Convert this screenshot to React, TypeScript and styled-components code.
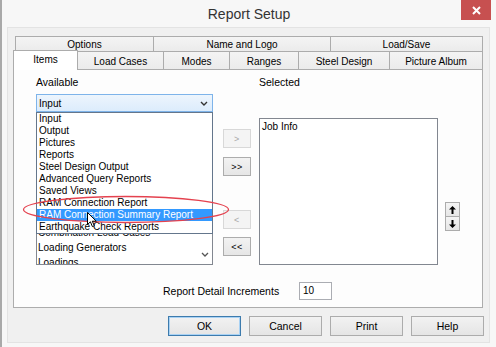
import React from "react";
import styled, { createGlobalStyle, css } from "styled-components";

const GlobalStyle = createGlobalStyle`
  html, body {
    margin: 0;
    padding: 0;
    background: #fafafa;
  }
  body {
    font-family: "Liberation Sans", Arial, sans-serif;
    font-size: 10px;
    color: #000;
  }
`;

const Window = styled.div`
  width: 496px;
  height: 347px;
  box-sizing: border-box;
  border-left: 2px solid #a9a9a9;
  background: #f7f7f7;
  display: flex;
  flex-direction: column;
  overflow: hidden;
`;

const TitleBar = styled.div`
  height: 27px;
  flex-shrink: 0;
  display: grid;
  grid-template-columns: 1fr auto 1fr;
  align-items: start;
`;

const Title = styled.div`
  grid-column: 2;
  margin-top: 7px;
  font-size: 14px;
  line-height: 15px;
  color: #333;
`;

const CloseButton = styled.div`
  grid-column: 3;
  justify-self: end;
  margin-right: 5px;
  width: 30px;
  height: 20px;
  background: #c75050;
  display: flex;
  align-items: center;
  justify-content: center;
`;

const Client = styled.div`
  margin: 0 6px 4px 5px;
  height: 316px;
  flex-shrink: 0;
  box-sizing: border-box;
  border: 1px solid #e3e3e3;
  background: #f0f0f0;
  display: flex;
  flex-direction: column;
  padding: 8px 0 0 5px;
`;

const Tabs = styled.div`
  width: 470px;
  display: flex;
  flex-direction: column;
`;

const TabRow = styled.div<{ $indent?: number; $h: number }>`
  display: flex;
  height: ${(p) => p.$h}px;
  padding-left: ${(p) => p.$indent || 0}px;
`;

const Tab = styled.div<{ $w: number; $active?: boolean }>`
  width: ${(p) => p.$w}px;
  box-sizing: border-box;
  margin-right: -1px;
  border: 1px solid #acacac;
  border-bottom: none;
  background: linear-gradient(#f4f4f4, #ebebeb);
  display: flex;
  align-items: center;
  justify-content: center;
  font-size: 10px;
  padding-top: 1px;
  ${(p) =>
    p.$active &&
    css`
      position: relative;
      z-index: 2;
      height: 20px;
      margin-top: -1px;
      background: #fff;
      padding-top: 0;
      padding-bottom: 2px;
    `}
`;

const Panel = styled.div`
  position: relative;
  width: 470px;
  height: 239px;
  box-sizing: border-box;
  border: 1px solid #adadad;
  background: #fdfdfd;
  display: grid;
  grid-template-columns: 177px 10px 28px 8px 179px 7px 15px;
  grid-template-rows: 12px 18px 147px auto;
  row-gap: 6px;
  padding: 6px 0 0 22px;
`;

const Label = styled.div<{ $col: number }>`
  grid-column: ${(p) => p.$col};
  grid-row: 1;
  font-size: 10.5px;
  line-height: 12px;
  white-space: nowrap;
`;

const ComboWrap = styled.div`
  grid-column: 1;
  grid-row: 2;
  position: relative;
  z-index: 3;
`;

const Combo = styled.div`
  height: 18px;
  box-sizing: border-box;
  border: 1px solid #7eb4ea;
  background: linear-gradient(#edf5fd, #dcecfc);
  display: flex;
  align-items: center;
  justify-content: space-between;
  padding: 0 4px 0 2px;
`;

const Dropdown = styled.div`
  position: absolute;
  top: 18px;
  left: 0;
  width: 177px;
  box-sizing: border-box;
  border: 1px solid #64768c;
  background: #fff;
`;

const DropItem = styled.div<{ $selected?: boolean }>`
  height: 12px;
  line-height: 12px;
  padding-left: 2px;
  white-space: nowrap;
  ${(p) =>
    p.$selected &&
    css`
      background: #3399ff;
      color: #fff;
    `}
`;

const Ellipse = styled.svg`
  position: absolute;
  left: -14px;
  top: 101px;
`;

const Cursor = styled.svg`
  position: absolute;
  left: 51px;
  top: 118px;
`;

const ListBox = styled.div<{ $col: number }>`
  grid-column: ${(p) => p.$col};
  grid-row: 3;
  position: relative;
  box-sizing: border-box;
  border: 1px solid #828790;
  background: #fff;
  overflow: hidden;
`;

/* the upper part of this list sits under the open dropdown */
const AvailItems = styled.div`
  padding: 106px 0 0 1px;
`;

const AvailItem = styled.div`
  height: 15px;
  line-height: 15px;
  white-space: nowrap;
`;

const SelectedItem = styled.div`
  padding: 1px 2px;
  line-height: 13px;
`;

const ScrollArrow = styled.svg`
  position: absolute;
  right: 3px;
  bottom: 7px;
`;

const MoveColumn = styled.div`
  grid-column: 3;
  grid-row: 3;
  display: flex;
  flex-direction: column;
  padding-top: 11px;
`;

const SmallButton = styled.div<{ $disabled?: boolean; $gap?: number }>`
  height: 19px;
  margin-top: ${(p) => p.$gap || 0}px;
  box-sizing: border-box;
  border: 1px solid ${(p) => (p.$disabled ? "#d8d8d8" : "#acacac")};
  background: ${(p) =>
    p.$disabled ? "#f4f4f4" : "linear-gradient(#f2f2f2, #e6e6e6)"};
  color: ${(p) => (p.$disabled ? "#a8a8a8" : "#000")};
  display: flex;
  align-items: center;
  justify-content: center;
  font-size: 9px;
  letter-spacing: 0.5px;
`;

const OrderColumn = styled.div`
  grid-column: 7;
  grid-row: 3;
  margin-top: 85px;
  display: flex;
  flex-direction: column;
`;

const OrderButton = styled.div`
  width: 15px;
  height: 15px;
  box-sizing: border-box;
  border: 1px solid #acacac;
  margin-top: -1px;
  background: linear-gradient(#f4f4f4, #e6e6e6);
  display: flex;
  align-items: center;
  justify-content: center;
`;

const ReportRow = styled.div`
  grid-column: 1 / -1;
  grid-row: 4;
  margin-top: 4px;
  display: flex;
  align-items: center;
  padding-left: 127px;
`;

const ReportLabel = styled.div`
  width: 136px;
  font-size: 10.5px;
  white-space: nowrap;
`;

const NumberBox = styled.div`
  width: 33px;
  height: 18px;
  box-sizing: border-box;
  border: 1px solid #abadb3;
  background: #fff;
  padding: 0 3px;
  line-height: 15px;
`;

const ButtonRow = styled.div`
  margin-top: 8px;
  display: flex;
  justify-content: flex-end;
  gap: 8px;
  padding-right: 5px;
`;

const DialogButton = styled.div<{ $default?: boolean }>`
  width: 73px;
  height: 20px;
  box-sizing: border-box;
  border: 1px solid ${(p) => (p.$default ? "#3d7bad" : "#acacac")};
  background: linear-gradient(#f2f2f2, #e5e5e5);
  display: flex;
  align-items: center;
  justify-content: center;
  font-size: 10.5px;
  ${(p) =>
    p.$default &&
    css`
      box-shadow: inset 0 0 0 1px #a9d2f4;
    `}
`;

const Chevron = () => (
  <svg width="8" height="5" viewBox="0 0 8 5">
    <path d="M1 1 L4 4 L7 1" fill="none" stroke="#333" strokeWidth="1.4" />
  </svg>
);

const ArrowIcon = ({ down }: { down?: boolean }) => (
  <svg width="7" height="8" viewBox="0 0 7 8" style={down ? { transform: "rotate(180deg)" } : undefined}>
    <path d="M3.5 0 L7 3.5 L4.5 3.5 L4.5 8 L2.5 8 L2.5 3.5 L0 3.5 Z" fill="#000" />
  </svg>
);

const dropItems = [
  "Input",
  "Output",
  "Pictures",
  "Reports",
  "Steel Design Output",
  "Advanced Query Reports",
  "Saved Views",
  "RAM Connection Report",
  "RAM Connection Summary Report",
  "Earthquake Check Reports",
];

const availItems = ["Combination Load Cases", "Loading Generators", "Loadings"];

const row1 = [
  { name: "Options", w: 139 },
  { name: "Name and Logo", w: 178 },
  { name: "Load/Save", w: 153 },
];

const row2 = [
  { name: "Items", w: 65, active: true },
  { name: "Load Cases", w: 87 },
  { name: "Modes", w: 67 },
  { name: "Ranges", w: 70 },
  { name: "Steel Design", w: 92 },
  { name: "Picture Album", w: 94 },
];

const App = () => {
  return (
    <>
      <GlobalStyle />
      <Window>
        <TitleBar>
          <Title>Report Setup</Title>
          <CloseButton>
            <svg width="9" height="9" viewBox="0 0 9 9">
              <path d="M1 1 L8 8 M8 1 L1 8" stroke="#fff" strokeWidth="2" />
            </svg>
          </CloseButton>
        </TitleBar>
        <Client>
          <Tabs>
            <TabRow $indent={2} $h={15}>
              {row1.map((t) => (
                <Tab key={t.name} $w={t.w}>
                  {t.name}
                </Tab>
              ))}
            </TabRow>
            <TabRow $h={18}>
              {row2.map((t) => (
                <Tab key={t.name} $w={t.w} $active={t.active}>
                  {t.name}
                </Tab>
              ))}
            </TabRow>
          </Tabs>
          <Panel>
            <Label $col={1}>Available</Label>
            <Label $col={5}>Selected</Label>
            <ComboWrap>
              <Combo>
                <span>Input</span>
                <Chevron />
              </Combo>
              <Dropdown>
                {dropItems.map((item) => (
                  <DropItem key={item} $selected={item === "RAM Connection Summary Report"}>
                    {item}
                  </DropItem>
                ))}
              </Dropdown>
              <Ellipse width="208" height="30" viewBox="0 0 208 30">
                <ellipse cx="104" cy="14.5" rx="102.5" ry="13" fill="none" stroke="#e4424f" strokeWidth="1.3" />
              </Ellipse>
              <Cursor width="11" height="16" viewBox="0 0 11 16">
                <path
                  d="M0.5 0.5 L0.5 12.5 L3.4 9.8 L5.4 14.6 L7.3 13.8 L5.3 9.2 L9.3 9.2 Z"
                  fill="#fff"
                  stroke="#000"
                  strokeWidth="1"
                  strokeLinejoin="round"
                />
              </Cursor>
            </ComboWrap>
            <ListBox $col={1}>
              <AvailItems>
                {availItems.map((item) => (
                  <AvailItem key={item}>{item}</AvailItem>
                ))}
              </AvailItems>
              <ScrollArrow width="8" height="5" viewBox="0 0 8 5">
                <path d="M1 1 L4 4 L7 1" fill="none" stroke="#555" strokeWidth="1.3" />
              </ScrollArrow>
            </ListBox>
            <MoveColumn>
              <SmallButton $disabled>&gt;</SmallButton>
              <SmallButton $gap={9}>&gt;&gt;</SmallButton>
              <SmallButton $disabled $gap={34}>&lt;</SmallButton>
              <SmallButton $gap={8}>&lt;&lt;</SmallButton>
            </MoveColumn>
            <ListBox $col={5}>
              <SelectedItem>Job Info</SelectedItem>
            </ListBox>
            <OrderColumn>
              <OrderButton>
                <ArrowIcon />
              </OrderButton>
              <OrderButton>
                <ArrowIcon down />
              </OrderButton>
            </OrderColumn>
            <ReportRow>
              <ReportLabel>Report Detail Increments</ReportLabel>
              <NumberBox>10</NumberBox>
            </ReportRow>
          </Panel>
          <ButtonRow>
            <DialogButton $default>OK</DialogButton>
            <DialogButton>Cancel</DialogButton>
            <DialogButton>Print</DialogButton>
            <DialogButton>Help</DialogButton>
          </ButtonRow>
        </Client>
      </Window>
    </>
  );
};

export default App;
